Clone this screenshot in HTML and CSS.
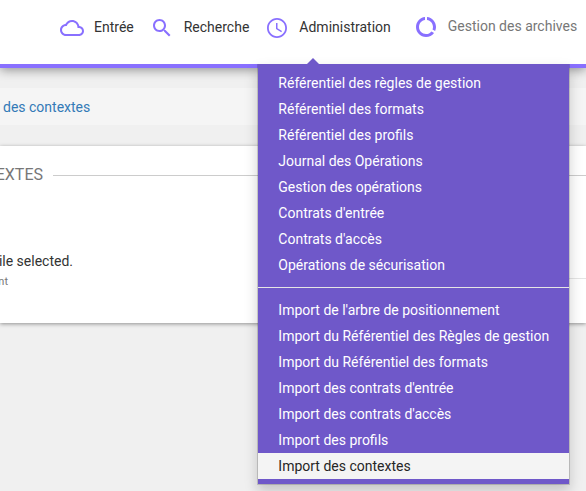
FILE: index.html
```html
<!DOCTYPE html>
<html lang="fr">
<head>
<meta charset="utf-8">
<meta name="viewport" content="width=device-width, initial-scale=1">
<title>Import des contextes</title>
<link rel="stylesheet" href="styles.css">
</head>
<body>
<header class="topbar">
  <nav>
    <ul class="nav">
      <li class="nav-item">
        <a class="nav-link" href="#">
          <svg class="icon" viewBox="0 0 24 24" aria-hidden="true"><path d="M19.35 10.04C18.67 6.59 15.64 4 12 4 9.11 4 6.6 5.64 5.35 8.04 2.34 8.36 0 10.91 0 14c0 3.31 2.69 6 6 6h13c2.76 0 5-2.24 5-5 0-2.64-2.05-4.78-4.65-4.96zM19 18H6c-2.21 0-4-1.79-4-4s1.79-4 4-4h.71C7.37 7.69 9.48 6 12 6c3.04 0 5.5 2.46 5.5 5.5v.5H19c1.66 0 3 1.34 3 3s-1.34 3-3 3z"/></svg>
          Entrée
        </a>
      </li>
      <li class="nav-item">
        <a class="nav-link" href="#">
          <svg class="icon" viewBox="0 0 24 24" aria-hidden="true"><path d="M15.5 14h-.79l-.28-.27C15.41 12.59 16 11.11 16 9.5 16 5.91 13.09 3 9.5 3S3 5.91 3 9.5 5.91 16 9.5 16c1.61 0 3.09-.59 4.23-1.57l.27.28v.79l5 4.99L20.49 19l-4.99-5zm-6 0C7.01 14 5 11.99 5 9.5S7.01 5 9.5 5 14 7.01 14 9.5 11.99 14 9.5 14z"/></svg>
          Recherche
        </a>
      </li>
      <li class="nav-item nav-item-open">
        <button class="nav-link" type="button" aria-expanded="true">
          <svg class="icon" viewBox="0 0 24 24" aria-hidden="true"><path d="M11.99 2C6.47 2 2 6.48 2 12s4.47 10 9.99 10C17.52 22 22 17.52 22 12S17.52 2 11.99 2zM12 20.2c-4.53 0-8.2-3.67-8.2-8.2S7.47 3.8 12 3.8s8.2 3.67 8.2 8.2-3.67 8.2-8.2 8.2z"/><path d="M12.5 7H11v6l5.25 3.15.75-1.23-4.5-2.67z"/></svg>
          Administration
        </button>
        <ul class="menu">
          <li><a href="#">Référentiel des règles de gestion</a></li>
          <li><a href="#">Référentiel des formats</a></li>
          <li><a href="#">Référentiel des profils</a></li>
          <li><a href="#">Journal des Opérations</a></li>
          <li><a href="#">Gestion des opérations</a></li>
          <li><a href="#">Contrats d'entrée</a></li>
          <li><a href="#">Contrats d'accès</a></li>
          <li><a href="#">Opérations de sécurisation</a></li>
          <li class="divider" role="separator"></li>
          <li><a href="#">Import de l'arbre de positionnement</a></li>
          <li><a href="#">Import du Référentiel des Règles de gestion</a></li>
          <li><a href="#">Import du Référentiel des formats</a></li>
          <li><a href="#">Import des contrats d'entrée</a></li>
          <li><a href="#">Import des contrats d'accès</a></li>
          <li><a href="#">Import des profils</a></li>
          <li><a class="active" href="#" aria-current="page">Import des contextes</a></li>
        </ul>
      </li>
      <li class="nav-item nav-item-muted">
        <a class="nav-link" href="#">
          <svg class="icon" viewBox="0 0 24 24" aria-hidden="true"><path d="M13 2.05v3.03c3.39.49 6 3.39 6 6.92 0 .9-.18 1.75-.48 2.54l2.6 1.53c.56-1.24.88-2.62.88-4.07 0-5.18-3.95-9.45-9-9.95zM12 19c-3.87 0-7-3.13-7-7 0-3.53 2.61-6.43 6-6.92V2.05c-5.06.5-9 4.76-9 9.95 0 5.52 4.47 10 9.99 10 3.31 0 6.24-1.61 8.06-4.09l-2.6-1.53C16.17 17.98 14.21 19 12 19z"/></svg>
          Gestion des archives
        </a>
      </li>
    </ul>
  </nav>
</header>
<main>
  <nav class="breadcrumb"><a href="#">des contextes</a></nav>
  <section class="panel">
    <div class="heading">
      <h1 class="title">EXTES</h1>
      <span class="rule"></span>
    </div>
    <p class="file">ile selected.</p>
    <p class="hint">nt</p>
    <div class="separator"></div>
  </section>
</main>
</body>
</html>
```
FILE: styles.css
```css
* {
  box-sizing: border-box;
}

body {
  margin: 0;
  min-height: 100vh;
  overflow: hidden;
  background: #f0f0f0;
  color: #333;
  font: 14px/20px Roboto, "Liberation Sans", sans-serif;
}

ul,
p,
h1 {
  margin: 0;
  padding: 0;
  list-style: none;
  font-weight: 400;
}

a {
  color: inherit;
  text-decoration: none;
}

.topbar {
  position: relative;
  z-index: 1;
  background: #fff;
  border-bottom: 4px solid #8970ff;
  box-shadow: 0 2px 10px rgba(0, 0, 0, 0.4);
}

.nav {
  display: flex;
  gap: 16px;
  padding-left: 60px;
}

.nav-item {
  position: relative;
  padding: 16px 0 24px;
  white-space: nowrap;
}

.nav-link {
  display: flex;
  align-items: flex-start;
  gap: 10px;
  height: 24px;
  padding: 0;
  border: 0;
  background: none;
  color: inherit;
  font: inherit;
  line-height: 22px;
}

.icon {
  flex: none;
  width: 24px;
  height: 24px;
  fill: #8970ff;
}

.nav-item-muted {
  padding: 15px 0 24px 7px;
  color: #777;
}

.nav-item-open::after {
  content: "";
  position: absolute;
  bottom: 0;
  left: 42px;
  border: 6px solid transparent;
  border-top: 0;
  border-bottom-color: #6f58c9;
}

.menu {
  position: absolute;
  top: 100%;
  left: -8px;
  padding: 6px 0 5px;
  border: 1px solid rgba(0, 0, 0, 0.15);
  border-top: 0;
  background: #6f58c9;
  background-clip: padding-box;
  box-shadow: 0 6px 12px rgba(0, 0, 0, 0.18);
  color: #fff;
}

.menu a {
  display: block;
  padding: 3px 20px;
}

.menu .active {
  background: #f4f4f4;
  color: #262626;
}

.divider {
  height: 1px;
  margin: 9px 0;
  background: #e5e5e5;
}

.breadcrumb {
  margin: 20px 0 21px;
  padding: 9px 3px 8px;
  background: #f5f5f5;
  color: #337ab7;
}

.panel {
  padding: 17px 0 30px;
  background: #fff;
  box-shadow: 0 1px 4px rgba(0, 0, 0, 0.4);
}

.heading {
  display: flex;
  align-items: center;
  gap: 10px;
  margin-bottom: 64px;
}

.title {
  display: flex;
  justify-content: flex-end;
  width: 43px;
  color: #777;
  font-size: 16px;
  line-height: 24px;
}

.rule {
  flex: 1;
  height: 1px;
  background: #ccc;
}

.file {
  display: flex;
  justify-content: flex-end;
  width: 73px;
  white-space: nowrap;
}

.hint {
  display: flex;
  justify-content: flex-end;
  width: 8px;
  color: #777;
  font-size: 11px;
  line-height: 22px;
}

.separator {
  height: 1px;
  margin: -15px 0 14px 258px;
  background: #e5e5e5;
}
```
